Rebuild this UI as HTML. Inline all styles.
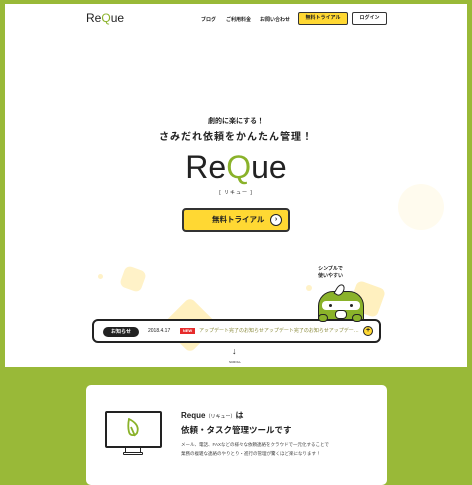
<!DOCTYPE html>
<html><head><meta charset="utf-8"><style>
*{margin:0;padding:0;box-sizing:border-box}
body{width:472px;height:472px;background:#99b938;position:relative;overflow:hidden;font-family:"Liberation Sans","Noto Sans CJK JP",sans-serif;color:#222}
.a{position:absolute}
.panel{left:5px;top:4px;width:462px;height:363px;background:#fff}
.nav{font-size:5px;font-weight:bold;top:16px}
.btn{border:1.5px solid #333;border-radius:2px;font-size:5px;font-weight:bold;text-align:center;line-height:10px}
.logo{font-family:"Liberation Sans",sans-serif}
</style></head><body>
<div class="a panel"></div>
<div class="a" style="left:398px;top:184px;width:46px;height:46px;border-radius:50%;background:#fffbee"></div>
<div class="a" style="left:122px;top:268px;width:22px;height:22px;border-radius:6px;background:#fff2c8;transform:rotate(20deg)"></div>
<div class="a" style="left:170px;top:305px;width:40px;height:40px;border-radius:6px;background:#fff0bf;transform:rotate(45deg)"></div>
<div class="a" style="left:352px;top:284px;width:30px;height:30px;border-radius:6px;background:#fff0bf;transform:rotate(20deg)"></div>
<div class="a" style="left:98px;top:274px;width:5px;height:5px;border-radius:50%;background:#fff2c8"></div>
<div class="a" style="left:306px;top:285px;width:6px;height:6px;border-radius:50%;background:#fff2c8"></div>
<div class="a logo" style="left:86px;top:11px;font-size:12px;line-height:14px">Re<span style="color:#8ab22a">Q</span>ue</div>
<div class="a nav" style="left:201px">ブログ</div>
<div class="a nav" style="left:226px">ご利用料金</div>
<div class="a nav" style="left:260px">お問い合わせ</div>
<div class="a btn" style="left:298px;top:12px;width:50px;height:13px;background:#ffd833">無料トライアル</div>
<div class="a btn" style="left:352px;top:12px;width:35px;height:13px;background:#fff">ログイン</div>
<div class="a" style="left:0;width:472px;top:116px;text-align:center;font-size:7px;font-weight:bold">劇的に楽にする！</div>
<div class="a" style="left:0;width:472px;top:128px;text-align:center;font-size:10px;font-weight:bold;letter-spacing:1px">さみだれ依頼をかんたん管理！</div>
<div class="a logo" style="left:0;width:472px;top:150px;text-align:center;font-size:32px;line-height:34px;color:#222">Re<span style="color:#8ab22a">Q</span>ue</div>
<div class="a" style="left:0;width:472px;top:189px;text-align:center;font-size:5px;letter-spacing:1px">[ リキュー ]</div>
<div class="a" style="left:182px;top:208px;width:108px;height:24px;background:#ffd833;border:2px solid #333;border-radius:4px;font-size:7.5px;font-weight:bold;line-height:20px;padding-left:28px">無料トライアル
<span class="a" style="right:6px;top:4px;width:12px;height:12px;border:1.5px solid #222;border-radius:50%;background:#fff;font-size:7px;line-height:9px;text-align:center">›</span></div>
<div class="a" style="left:318px;top:266px;font-size:5px;font-weight:bold;text-align:center;line-height:7px">シンプルで<br>使いやすい</div>
<div class="a" style="left:318px;top:291px;width:46px;height:36px;background:#8ab22a;border:1.5px solid #222;border-radius:15px 15px 6px 6px"></div>
<div class="a" style="left:322px;top:301px;width:38px;height:9px;background:#fff;border-radius:4px"></div>
<div class="a" style="left:329px;top:304px;width:3px;height:3px;background:#222;border-radius:50%"></div>
<div class="a" style="left:350px;top:304px;width:3px;height:3px;background:#222;border-radius:50%"></div>
<div class="a" style="left:335px;top:310px;width:12px;height:9px;background:#fff;border:1px solid #222;border-radius:4px"></div>
<div class="a" style="left:336px;top:284px;width:8px;height:12px;background:#fff;border:1.5px solid #222;border-radius:50% 50% 50% 0;transform:rotate(30deg)"></div>
<div class="a" style="left:92px;top:319px;width:289px;height:24px;background:#fff;border:2px solid #222;border-radius:6px"></div>
<div class="a" style="left:318px;top:314px;width:10px;height:8px;background:#8ab22a;border:1.5px solid #222;border-radius:5px"></div>
<div class="a" style="left:352px;top:314px;width:10px;height:8px;background:#8ab22a;border:1.5px solid #222;border-radius:5px"></div>
<div class="a" style="left:103px;top:327px;width:36px;height:10px;background:#222;border-radius:5px;color:#fff;font-size:5px;font-weight:bold;text-align:center;line-height:10px">お知らせ</div>
<div class="a" style="left:148px;top:328px;font-size:5px">2018.4.17</div>
<div class="a" style="left:180px;top:328px;width:15px;height:6px;background:#e62b2b;color:#fff;font-size:4px;font-weight:bold;text-align:center;line-height:6px">NEW</div>
<div class="a" style="left:199px;top:327px;font-size:5px;color:#8a8a3a;white-space:nowrap">アップデート完了のお知らせアップデート完了のお知らせアップデー…</div>
<div class="a" style="left:363px;top:326px;width:10px;height:10px;border-radius:50%;background:#ffd833;border:1.5px solid #222;font-size:7px;line-height:7px;text-align:center;font-weight:bold">+</div>
<div class="a" style="left:232px;top:346px;font-size:9px;font-weight:bold">↓</div>
<div class="a" style="left:229px;top:360px;font-size:3px">SCROLL</div>
<div class="a" style="left:86px;top:385px;width:301px;height:100px;background:#fff;border-radius:5px"></div>
<div class="a" style="left:105px;top:411px;width:57px;height:37px;border:2.5px solid #222;border-radius:2px"></div>
<div class="a" style="left:125px;top:448px;width:16px;height:5px;border:1.5px solid #222;border-top:none"></div>
<div class="a" style="left:123px;top:452px;width:20px;height:3px;border:1.5px solid #222;border-radius:1px"></div>
<svg class="a" style="left:125px;top:418px" width="16" height="20" viewBox="0 0 16 20"><path d="M4 1 C12 5 14 10 12 15 C10 18 5 18 4 14 C3 10 3 6 4 1 Z M6 9 L10 18" fill="none" stroke="#8ab22a" stroke-width="1.8"/></svg>
<div class="a" style="left:181px;top:410px;font-size:8px;font-weight:bold">Reque<span style="font-size:5px;font-weight:normal">（リキュー）</span>は</div>
<div class="a" style="left:181px;top:424px;font-size:8.5px;font-weight:bold">依頼・タスク管理ツールです</div>
<div class="a" style="left:181px;top:440px;font-size:4.5px;line-height:9px;color:#444">メール、電話、FAXなどの様々な依頼連絡をクラウドで一元化することで<br>業務の複雑な連絡のやりとり・進行の管理が驚くほど楽になります！</div>
</body></html>
